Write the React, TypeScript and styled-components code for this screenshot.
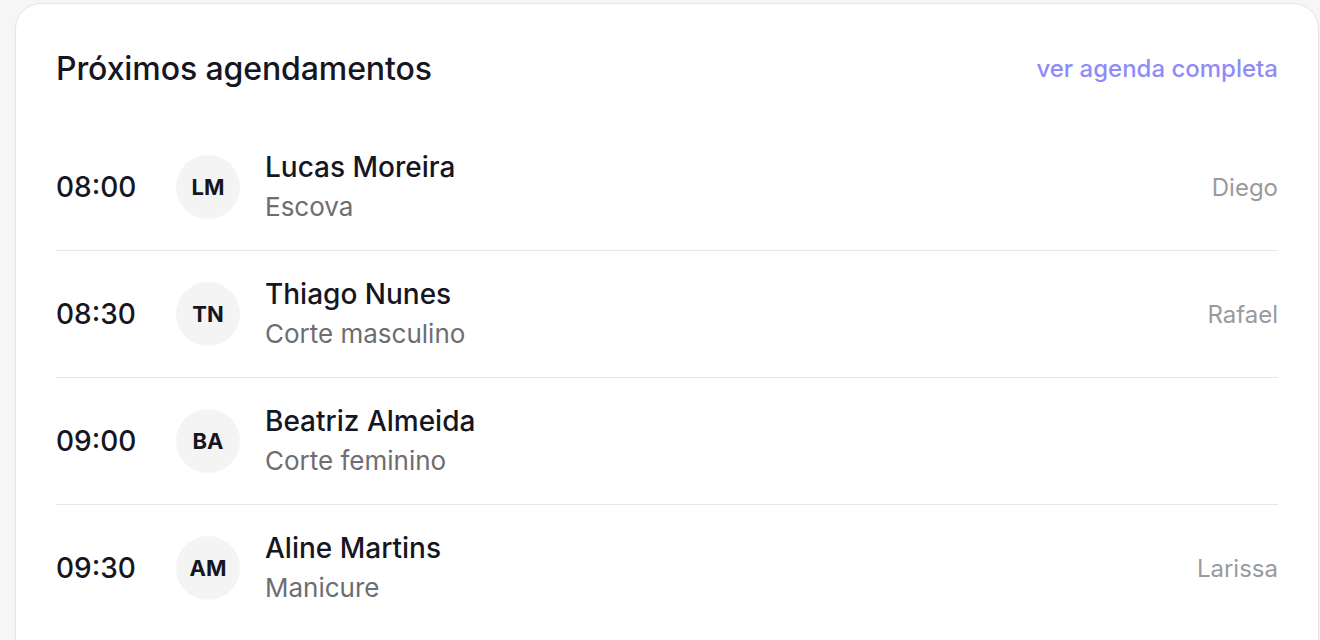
import styled, { createGlobalStyle } from "styled-components";

const GlobalStyle = createGlobalStyle`
  html, body {
    margin: 0;
    padding: 0;
    background: #f6f6f6;
    font-family: Inter, "Noto Sans", sans-serif;
    -webkit-font-smoothing: antialiased;
  }
`;

const Page = styled.div`
  padding: 3px 1px 0 15px;
  height: 640px;
  box-sizing: border-box;
  overflow: hidden;
`;

const Card = styled.section`
  background: #fff;
  border: 1px solid #e6e6e6;
  border-radius: 26px;
  padding: 32px 40px 40px;
  box-shadow: 0 1px 3px rgba(0, 0, 0, 0.04);
`;

const Header = styled.div`
  display: flex;
  align-items: center;
  justify-content: space-between;
  height: 64px;
  margin-bottom: 24px;
`;

const Title = styled.h2`
  margin: 0;
  font-size: 32px;
  font-weight: 500;
  color: #161622;
  letter-spacing: -0.1px;
`;

const FullLink = styled.a`
  font-size: 24px;
  font-weight: 500;
  color: #8f8cf7;
  text-decoration: none;
  cursor: pointer;
`;

const List = styled.ul`
  list-style: none;
  margin: 0;
  padding: 0;
`;

const Row = styled.li`
  display: flex;
  align-items: center;
  padding: 27px 0;
  border-bottom: 1px solid #e6e6e6;

  &:last-child {
    border-bottom: none;
  }
`;

const Time = styled.span`
  width: 120px;
  flex-shrink: 0;
  font-size: 28px;
  font-weight: 500;
  color: #161622;
`;

const Avatar = styled.div`
  width: 64px;
  height: 64px;
  border-radius: 50%;
  background: #f4f4f5;
  display: flex;
  align-items: center;
  justify-content: center;
  font-size: 22px;
  font-weight: 700;
  color: #161622;
  flex-shrink: 0;
  margin-right: 25px;
`;

const Info = styled.div`
  flex: 1;
  display: flex;
  flex-direction: column;
  gap: 8px;
`;

const Client = styled.span`
  font-size: 28px;
  line-height: 32px;
  font-weight: 500;
  color: #161622;
`;

const Service = styled.span`
  font-size: 26px;
  line-height: 32px;
  color: #6d6d72;
`;

const Staff = styled.span`
  font-size: 24px;
  color: #9a9a9e;
`;

const appointments = [
  { time: "08:00", initials: "LM", name: "Lucas Moreira", service: "Escova", staff: "Diego" },
  { time: "08:30", initials: "TN", name: "Thiago Nunes", service: "Corte masculino", staff: "Rafael" },
  { time: "09:00", initials: "BA", name: "Beatriz Almeida", service: "Corte feminino", staff: "" },
  { time: "09:30", initials: "AM", name: "Aline Martins", service: "Manicure", staff: "Larissa" },
];

export default function App() {
  return (
    <>
      <GlobalStyle />
      <Page>
        <Card>
          <Header>
            <Title>Próximos agendamentos</Title>
            <FullLink>ver agenda completa</FullLink>
          </Header>
          <List>
            {appointments.map((a) => (
              <Row key={a.time}>
                <Time>{a.time}</Time>
                <Avatar>{a.initials}</Avatar>
                <Info>
                  <Client>{a.name}</Client>
                  <Service>{a.service}</Service>
                </Info>
                {a.staff && <Staff>{a.staff}</Staff>}
              </Row>
            ))}
          </List>
        </Card>
      </Page>
    </>
  );
}
